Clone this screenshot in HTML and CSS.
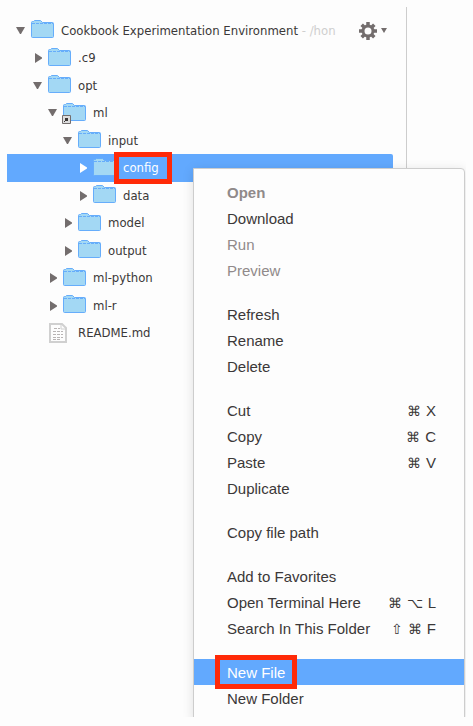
FILE: index.html
```html
<!DOCTYPE html>
<html lang="en">
<head>
<meta charset="utf-8">
<title>Cookbook Experimentation Environment</title>
<link rel="stylesheet" href="styles.css">
</head>
<body>
<svg class="defs" aria-hidden="true">
  <symbol id="folder" viewBox="0 0 23 18">
    <path d="M.5 4V2.500Q.5 1.500 1.500 1.500H2.500L3.500.5H9.500L11.500 2.500H21.500Q22.500 2.500 22.500 3.500V16.500Q22.500 17.500 21.500 17.500H1.500Q.5 17.500.5 16.500Z" fill="#a3d8f4" stroke="#66adfb"/>
    <path d="M1 3.500H22" stroke="#66adfb" stroke-dasharray="3 1"/>
  </symbol>
  <symbol id="down" viewBox="0 0 14 14"><path d="M3 3H12L8 10H7Z" fill="#736d6d"/></symbol>
  <symbol id="right" viewBox="0 0 14 14"><path d="M5 2L12 6.500V7.500L5 12Z" fill="currentColor"/></symbol>
  <symbol id="file" viewBox="0 0 18 20">
    <path d="M1 1H13L17 5V19H1Z" fill="#fdfdfd" stroke="#d0d0d0" stroke-width="2"/>
    <path d="M12 1V6H17" fill="none" stroke="#d0d0d0"/>
    <path d="M5 5.500H11M4 8.500H14M4 11.500H14M4 14.500H14M4 16.500H12" stroke="#b8b4b4" stroke-dasharray="3 1"/>
  </symbol>
</svg>
<main class="ide">
  <nav class="sidebar" aria-label="Workspace">
    <ul class="tree">
      <li class="row root"><svg class="arrow"><use href="#down"/></svg><svg class="icon"><use href="#folder"/></svg><span class="name">Cookbook Experimentation Environment <span class="path">- /hon</span></span>
        <button class="settings" aria-label="Tree settings"><svg class="gear" viewBox="-9 -9 18 18"><g stroke="#736d6d" stroke-width="3.500"><path d="M0-9V-5M0 5V9M-9 0H-5M5 0H9M-6.300-6.300L-4-4M4 4L6.300 6.300M-6.300 6.300L-4 4M4-4L6.300-6.300"/></g><circle r="5" fill="none" stroke="#736d6d" stroke-width="3"/></svg><svg class="caret" viewBox="0 0 6 5"><path d="M0 0H6L3 5Z" fill="#736d6d"/></svg></button></li>
      <li class="row d1"><svg class="arrow"><use href="#right"/></svg><svg class="icon"><use href="#folder"/></svg><span class="name">.c9</span></li>
      <li class="row d1"><svg class="arrow"><use href="#down"/></svg><svg class="icon"><use href="#folder"/></svg><span class="name">opt</span></li>
      <li class="row d2"><svg class="arrow"><use href="#down"/></svg><span class="linked"><svg class="icon"><use href="#folder"/></svg><svg class="link" viewBox="0 0 9 9"><path d="M.5.5H8.500V8.500H.5Z" fill="#ddd" stroke="#736d6d"/><path d="M3 3H6V6H3Z" fill="#3b3838"/><path d="M2 7L4 5" stroke="#3b3838"/></svg></span><span class="name">ml</span></li>
      <li class="row d3"><svg class="arrow"><use href="#down"/></svg><svg class="icon"><use href="#folder"/></svg><span class="name">input</span></li>
      <li class="row d4 selected"><svg class="arrow"><use href="#right"/></svg><svg class="icon"><use href="#folder"/></svg><span class="name marked">config</span></li>
      <li class="row d4"><svg class="arrow"><use href="#right"/></svg><svg class="icon"><use href="#folder"/></svg><span class="name">data</span></li>
      <li class="row d3"><svg class="arrow"><use href="#right"/></svg><svg class="icon"><use href="#folder"/></svg><span class="name">model</span></li>
      <li class="row d3"><svg class="arrow"><use href="#right"/></svg><svg class="icon"><use href="#folder"/></svg><span class="name">output</span></li>
      <li class="row d2"><svg class="arrow"><use href="#right"/></svg><svg class="icon"><use href="#folder"/></svg><span class="name">ml-python</span></li>
      <li class="row d2"><svg class="arrow"><use href="#right"/></svg><svg class="icon"><use href="#folder"/></svg><span class="name">ml-r</span></li>
      <li class="row d1"><span class="arrow"></span><svg class="icon file"><use href="#file"/></svg><span class="name">README.md</span></li>
    </ul>
  </nav>
  <section class="editor" aria-label="Editor"></section>
  <div class="menu" role="menu">
    <div class="group">
      <button class="item default" role="menuitem" disabled>Open</button>
      <button class="item" role="menuitem">Download</button>
      <button class="item" role="menuitem" disabled>Run</button>
      <button class="item" role="menuitem" disabled>Preview</button>
    </div>
    <div class="group">
      <button class="item" role="menuitem">Refresh</button>
      <button class="item" role="menuitem">Rename</button>
      <button class="item" role="menuitem">Delete</button>
    </div>
    <div class="group">
      <button class="item" role="menuitem">Cut<span class="keys"><span class="mod">⌘</span><span>X</span></span></button>
      <button class="item" role="menuitem">Copy<span class="keys"><span class="mod">⌘</span><span>C</span></span></button>
      <button class="item" role="menuitem">Paste<span class="keys"><span class="mod">⌘</span><span>V</span></span></button>
      <button class="item" role="menuitem">Duplicate</button>
    </div>
    <div class="group">
      <button class="item" role="menuitem">Copy file path</button>
    </div>
    <div class="group">
      <button class="item" role="menuitem">Add to Favorites</button>
      <button class="item" role="menuitem">Open Terminal Here<span class="keys"><span class="mod">⌘</span><span class="mod">⌥</span><span>L</span></span></button>
      <button class="item" role="menuitem">Search In This Folder<span class="keys"><span class="mod">⇧</span><span class="mod">⌘</span><span>F</span></span></button>
    </div>
    <div class="group">
      <button class="item active" role="menuitem"><span class="marked">New File</span></button>
      <button class="item" role="menuitem">New Folder</button>
    </div>
  </div>
</main>
</body>
</html>
```
FILE: styles.css
```css
* { box-sizing: border-box; }
body {
  margin: 0;
  padding: 7px 7px 9px;
  height: 100vh;
  background: #fdfdfd;
  color: #3b3838;
}
.defs { position: absolute; width: 0; height: 0; }
.ide {
  position: relative;
  display: grid;
  grid-template-columns: minmax(0, 1fr) 59px;
  height: 100%;
  overflow: hidden;
}
.sidebar {
  padding: 10px 13px 0 0;
  border-right: 1px solid #cdcdcd;
}
.tree {
  margin: 0;
  padding: 0;
  list-style: none;
  font: 13px/20px "DejaVu Sans Condensed", "DejaVu Sans", sans-serif;
}
.row {
  display: flex;
  align-items: center;
  height: 27px;
  color: #3b3838;
}
.row:nth-child(even) { height: 28px; }
.root { padding-left: 6px; }
.d1 { padding-left: 23px; }
.d2 { padding-left: 38px; }
.d3 { padding-left: 53px; }
.d4 { padding-left: 68px; }
.arrow {
  flex: none;
  width: 14px;
  height: 14px;
  margin-right: 4px;
  color: #736d6d;
}
.icon {
  display: block;
  flex: none;
  width: 23px;
  height: 18px;
  margin-right: 7px;
}
.row > .icon, .linked { margin-bottom: 3px; }
.row > .file { width: 18px; height: 20px; margin: 0 11px 0 1px; }
.linked { position: relative; }
.link { position: absolute; left: -1px; bottom: -3px; width: 9px; height: 9px; }
.name { white-space: nowrap; }
.path { color: #cfcfcf; }
.selected {
  background: #62a9fe;
  border-radius: 0 2px 2px 0;
  color: #fff;
}
.selected .arrow { color: #fff; }
.settings {
  display: flex;
  align-items: center;
  gap: 4px;
  margin: 0 6px 0 auto;
  padding: 0;
  border: 0;
  background: none;
}
.gear { width: 18px; height: 18px; }
.caret { width: 6px; height: 5px; }
.marked { position: relative; }
.marked::after {
  content: "";
  position: absolute;
  inset: -8px -12px -6px;
  border: 5px solid #ff2a08;
}
.selected .marked::after { inset: -6px -13px -6px -9px; }
.menu {
  position: absolute;
  top: 161px;
  left: 186px;
  right: 1px;
  padding: 10px 0;
  border: 1px solid #cdcdcd;
  border-radius: 0 4px 4px 4px;
  background: #fdfdfd;
  box-shadow: 0 2px 12px rgba(0, 0, 0, .12);
}
.group + .group { margin-top: 18px; }
.item {
  display: flex;
  justify-content: space-between;
  align-items: center;
  width: 100%;
  height: 26px;
  padding: 2px 28px 0 33px;
  border: 0;
  background: none;
  color: #3b3838;
  font: 15px/20px "Liberation Sans", Arial, sans-serif;
  text-align: left;
}
.item:disabled { color: #908a8a; }
.default { font-weight: bold; }
.active { background: #62a9fe; color: #fff; }
.keys { display: flex; gap: 5px; }
.mod { font-size: 14px; }
```
